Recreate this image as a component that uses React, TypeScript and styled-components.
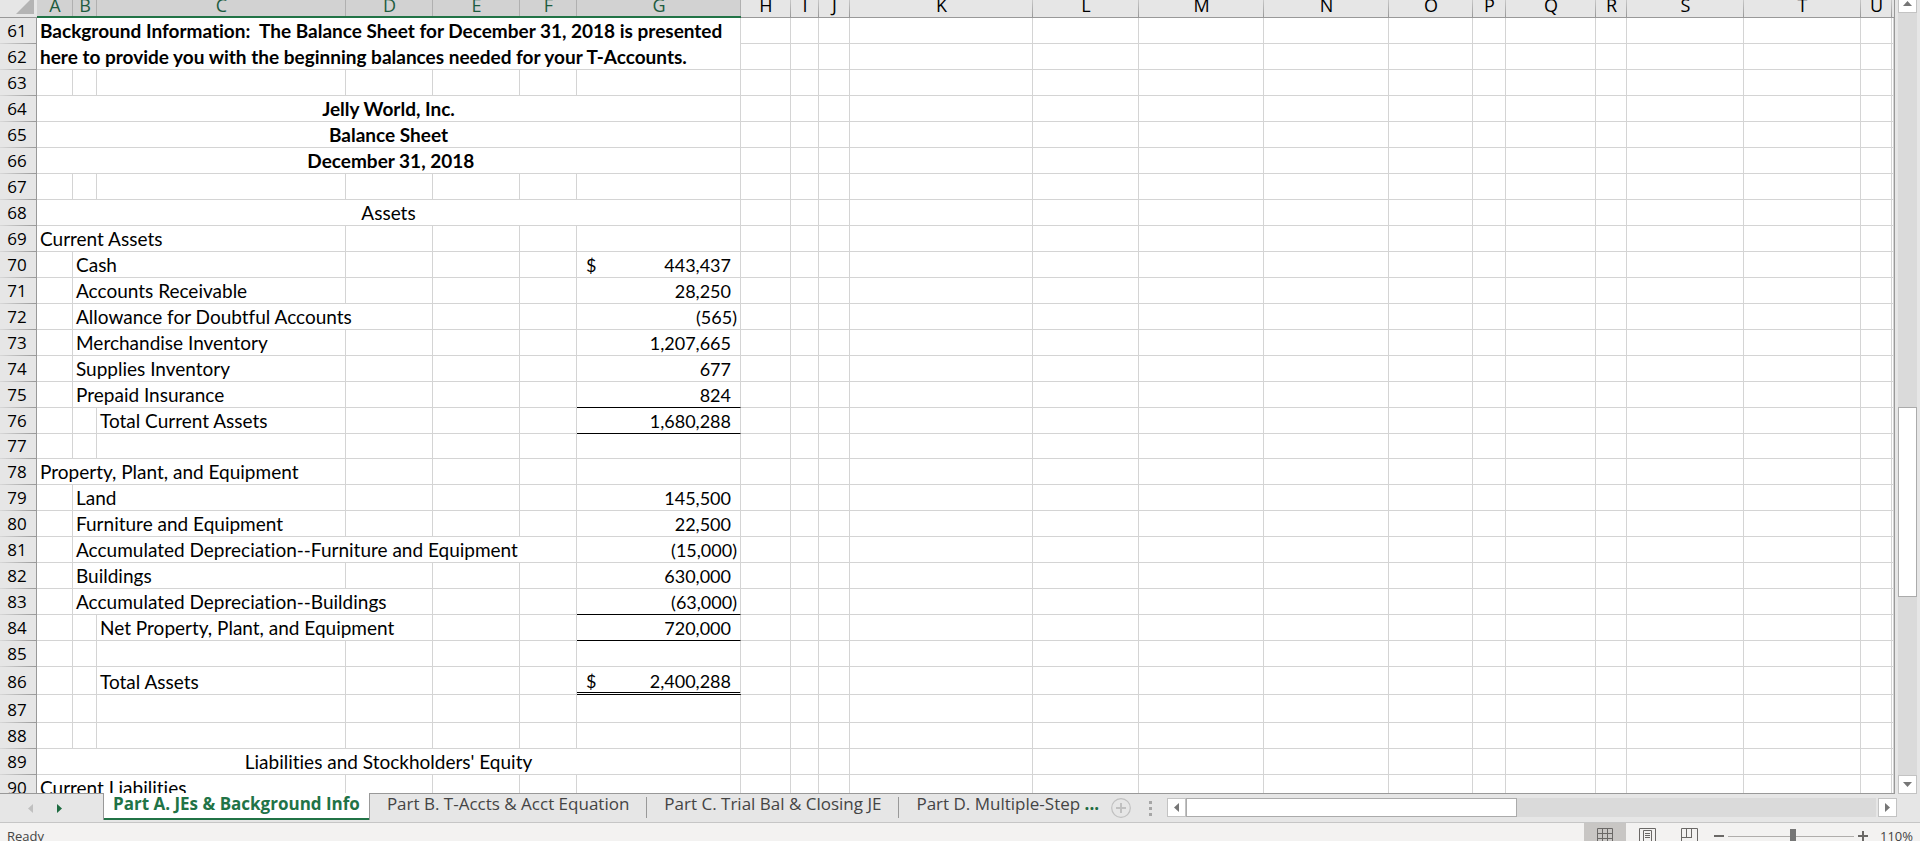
import React from 'react';
import styled, { createGlobalStyle, css } from 'styled-components';

const GlobalStyle = createGlobalStyle`
  * { box-sizing: border-box; }
  html, body { margin: 0; background: #e6e6e6; }
  button { margin: 0; padding: 0; border: 0; background: none; font: inherit; color: inherit; cursor: pointer; }
`;

const uiFont = `'Open Sans', 'Noto Sans', sans-serif`;
const cellFont = `Lato, 'Liberation Sans', sans-serif`;

const Workbook = styled.div`
  display: flex;
  flex-direction: column;
  height: 100vh;
  overflow: hidden;
  font-family: ${uiFont};
  color: #000;
`;

const SheetArea = styled.main`
  display: flex;
  flex: 1;
  min-height: 0;
  background: #e6e6e6;
`;

const GridPane = styled.div`
  flex: 1;
  min-width: 0;
  overflow: hidden;
  background: #fff;
  border-right: 1px solid #999;
  border-bottom: 1px solid #999;
`;

const Grid = styled.table`
  width: 100%;
  table-layout: fixed;
  border-collapse: separate;
  border-spacing: 0;
`;

const Corner = styled.td`
  padding: 0 3px 0 0;
  height: 18px;
  background: #e6e6e6;
  border-bottom: 1px solid #999;
  text-align: right;
  svg { display: block; margin-left: auto; }
`;

const ColHead = styled.th<{ $selected?: boolean; $edge?: boolean }>`
  padding: 0;
  height: 18px;
  font-size: 18px;
  font-weight: 400;
  vertical-align: bottom;
  color: ${p => (p.$selected ? '#1e5c40' : '#000')};
  border-bottom: ${p => (p.$selected ? '2px solid #217346' : '1px solid #999')};
  background: ${p =>
    p.$edge
      ? '#e6e6e6'
      : p.$selected
        ? 'linear-gradient(#b0b0b0, #b0b0b0) right / 1px 100% no-repeat #d2d2d2'
        : 'linear-gradient(#c8c8c8, #999) right / 1px 100% no-repeat #e6e6e6'};
`;

const ColLetter = styled.div<{ $selected?: boolean }>`
  display: flex;
  align-items: flex-end;
  justify-content: center;
  height: ${p => (p.$selected ? 16 : 17)}px;
  padding-bottom: ${p => (p.$selected ? 1 : 2)}px;
  line-height: 20px;
  overflow: hidden;
`;

const Row = styled.tr<{ $h: number }>`
  height: ${p => p.$h}px;
`;

const RowHead = styled.th`
  padding: 0 2px 2px 0;
  font-size: 17px;
  font-weight: 400;
  line-height: 22px;
  text-align: center;
  vertical-align: bottom;
  border-right: 1px solid #999;
  background: linear-gradient(90deg, #d8d8d8, #999) bottom / 100% 1px no-repeat #e6e6e6;
`;

type Rule = 'single' | 'double';

const Cell = styled.td<{ $align?: 'left' | 'center'; $bold?: boolean; $rule?: Rule }>`
  padding: 0 3px 1px;
  font-family: ${cellFont};
  font-size: 19px;
  font-variant-ligatures: none;
  line-height: 22px;
  font-weight: ${p => (p.$bold ? 700 : 400)};
  text-align: ${p => p.$align ?? 'left'};
  vertical-align: bottom;
  white-space: pre;
  border-right: 1px solid #d4d4d4;
  border-bottom: 1px solid #d4d4d4;
  ${p => p.$rule === 'single' && css`border-bottom: 1px solid #000;`}
  ${p => p.$rule === 'double' && css`
    padding-bottom: 0;
    border-bottom: 3px double #000;
  `}
`;

const Paragraph = styled.div`
  height: 50px;
  line-height: 26px;
`;

const Money = styled.div<{ $negative?: boolean }>`
  display: flex;
  justify-content: space-between;
  padding-left: 6px;
  padding-right: ${p => (p.$negative ? 0 : 6)}px;
  font-size: 18px;
`;

const VScroll = styled.div`
  display: flex;
  flex-direction: column;
  width: 19px;
  margin: 0 3px;
  background: #dadada;
`;

const ScrollButton = styled.button<{ $clipped?: boolean }>`
  display: flex;
  align-items: center;
  justify-content: center;
  flex: none;
  width: 19px;
  height: ${p => (p.$clipped ? 13 : 19)}px;
  padding-bottom: ${p => (p.$clipped ? 5 : 0)}px;
  background: #fff;
  border: 1px solid #c3c3c3;
  border-top-width: ${p => (p.$clipped ? 0 : 1)}px;
`;

const VThumb = styled.div`
  height: 190px;
  background: #fff;
  border: 1px solid #ababab;
`;

const Spacer = styled.div<{ $grow: number }>`
  flex: ${p => p.$grow} 1 0;
`;

const TabBar = styled.nav`
  display: flex;
  flex: none;
  height: 28px;
  background: #e6e6e6;
`;

const TabArrows = styled.div`
  display: flex;
  align-items: center;
  gap: 24px;
  width: 103px;
  padding-left: 28px;
  svg { display: block; }
`;

const Tab = styled.button<{ $active?: boolean }>`
  font-size: 17px;
  line-height: 20px;
  white-space: nowrap;
  color: #444;
  padding: 0 17px 6px;
  height: 25px;
  ${p => p.$active && css`
    position: relative;
    height: 27px;
    margin-top: -1px;
    padding: 0 9px 6px;
    background: #fff;
    color: #217346;
    font-weight: 700;
    border: solid #999;
    border-width: 0 1px;
    box-shadow: inset 0 -2px #217346;
  `}
`;

const TabDivider = styled.span`
  width: 1px;
  height: 21px;
  margin-top: 3px;
  background: #999;
`;

const MoreTabs = styled.span`
  color: #1e6b41;
  font-weight: 700;
`;

const AddSheet = styled.button`
  width: 20px;
  height: 20px;
  margin: 4px 18px 0 -5px;
  svg { display: block; }
`;

const SplitHandle = styled.div`
  display: flex;
  flex-direction: column;
  gap: 3px;
  width: 3px;
  margin: 7px 15px 0 0;
  i { width: 3px; height: 3px; background: #a6a6a6; }
`;

const HScroll = styled.div`
  display: flex;
  flex: 1;
  height: 19px;
  margin: 4px 23px 0 0;
`;

const HTrack = styled.div`
  display: flex;
  flex: 1;
  margin-right: 2px;
  background: #dadada;
`;

const HThumb = styled.div`
  width: 48%;
  background: #fff;
  border: 1px solid #ababab;
`;

const StatusBar = styled.footer`
  display: flex;
  flex: none;
  align-items: flex-start;
  height: 19px;
  overflow: hidden;
  background: #f3f2f1;
  border-top: 1px solid #c6c6c6;
  font-size: 13px;
  line-height: 18px;
  color: #444;
`;

const Ready = styled.span`
  margin: 4px auto 0 7px;
`;

const ViewButton = styled.button<{ $active?: boolean }>`
  display: flex;
  justify-content: center;
  width: 42px;
  height: 26px;
  padding-top: 5px;
  background: ${p => (p.$active ? '#c8c6c4' : 'transparent')};
`;

const ZoomButton = styled.button`
  width: 18px;
  padding-top: 7px;
  svg { display: block; margin: 0 auto; }
`;

const ZoomSlider = styled.input`
  appearance: none;
  width: 126px;
  height: 14px;
  margin: 6px 0 0;
  background: linear-gradient(#b0aeac, #b0aeac) center / 100% 1px no-repeat;
  &::-webkit-slider-thumb {
    appearance: none;
    width: 6px;
    height: 14px;
    background: #767676;
  }
`;

const ZoomValue = styled.span`
  width: 48px;
  margin-top: 4px;
  padding-left: 8px;
`;

const columns: [string, number][] = [
  ['A', 36], ['B', 24], ['C', 249], ['D', 87], ['E', 87], ['F', 57], ['G', 164],
  ['H', 50], ['I', 28], ['J', 31], ['K', 183], ['L', 106], ['M', 125], ['N', 125],
  ['O', 84], ['P', 33], ['Q', 90], ['R', 31], ['S', 117], ['T', 117], ['U', 31],
];

const SELECTED = 7;

interface RowData {
  n: number;
  h?: number;
  title?: string;
  bold?: boolean;
  label?: string;
  start?: number;
  span?: number;
  value?: string;
  dollar?: boolean;
  rule?: Rule;
}

const rows: RowData[] = [
  { n: 61 },
  { n: 62 },
  { n: 63 },
  { n: 64, title: 'Jelly World, Inc.', bold: true },
  { n: 65, title: 'Balance Sheet', bold: true },
  { n: 66, title: ' December 31, 2018', bold: true },
  { n: 67 },
  { n: 68, title: 'Assets' },
  { n: 69, label: 'Current Assets', start: 0, span: 3 },
  { n: 70, label: 'Cash', start: 1, span: 2, value: '443,437', dollar: true },
  { n: 71, label: 'Accounts Receivable', start: 1, span: 2, value: '28,250' },
  { n: 72, label: 'Allowance for Doubtful Accounts', start: 1, span: 3, value: '(565)' },
  { n: 73, label: 'Merchandise Inventory', start: 1, span: 2, value: '1,207,665' },
  { n: 74, label: 'Supplies Inventory', start: 1, span: 2, value: '677' },
  { n: 75, label: 'Prepaid Insurance', start: 1, span: 2, value: '824', rule: 'single' },
  { n: 76, label: 'Total Current Assets', start: 2, span: 1, value: '1,680,288', rule: 'single' },
  { n: 77, h: 25 },
  { n: 78, label: 'Property, Plant, and Equipment', start: 0, span: 3 },
  { n: 79, label: 'Land', start: 1, span: 2, value: '145,500' },
  { n: 80, label: 'Furniture and Equipment', start: 1, span: 2, value: '22,500' },
  { n: 81, label: 'Accumulated Depreciation--Furniture and Equipment', start: 1, span: 5, value: '(15,000)' },
  { n: 82, label: 'Buildings', start: 1, span: 2, value: '630,000' },
  { n: 83, label: 'Accumulated Depreciation--Buildings', start: 1, span: 3, value: '(63,000)', rule: 'single' },
  { n: 84, label: 'Net Property, Plant, and Equipment', start: 2, span: 2, value: '720,000', rule: 'single' },
  { n: 85 },
  { n: 86, h: 28, label: 'Total Assets', start: 2, span: 1, value: '2,400,288', dollar: true, rule: 'double' },
  { n: 87, h: 28 },
  { n: 88 },
  { n: 89, title: "Liabilities and Stockholders' Equity" },
  { n: 90, label: 'Current Liabilities', start: 0, span: 3 },
];

function blanks(from: number, to: number) {
  return columns.slice(from, to).map(([name]) => <Cell key={name} />);
}

function Amount({ row }: { row: RowData }) {
  if (!row.value) return <Cell />;
  return (
    <Cell $rule={row.rule}>
      <Money $negative={row.value.startsWith('(')}>
        <span>{row.dollar ? '$' : ''}</span>
        <span>{row.value}</span>
      </Money>
    </Cell>
  );
}

function StatementCells({ row }: { row: RowData }) {
  if (row.n === 61) {
    return (
      <Cell colSpan={7} rowSpan={2} $bold>
        <Paragraph>
          {'Background Information:  The Balance Sheet for December 31, 2018 is presented\nhere to provide you with the beginning balances needed for your T-Accounts.'}
        </Paragraph>
      </Cell>
    );
  }
  if (row.n === 62) return null;
  if (row.title) {
    return <Cell colSpan={7} $align="center" $bold={row.bold}>{row.title}</Cell>;
  }
  if (row.label) {
    const start = row.start ?? 0;
    const span = row.span ?? 1;
    return (
      <>
        {blanks(0, start)}
        <Cell colSpan={span}>{row.label}</Cell>
        {blanks(start + span, 6)}
        <Amount row={row} />
      </>
    );
  }
  return <>{blanks(0, 7)}</>;
}

function Arrow({ dir, color = '#767676' }: { dir: 'up' | 'down' | 'left' | 'right'; color?: string }) {
  const shape = {
    up: '0,5 9,5 4.5,0',
    down: '0,0 9,0 4.5,5',
    left: '5,0 5,9 0,4.5',
    right: '0,0 0,9 5,4.5',
  }[dir];
  const vertical = dir === 'up' || dir === 'down';
  return (
    <svg width={vertical ? 9 : 5} height={vertical ? 5 : 9} aria-hidden="true">
      <polygon points={shape} fill={color} />
    </svg>
  );
}

export default function App() {
  return (
    <Workbook>
      <GlobalStyle />
      <SheetArea>
        <GridPane>
          <Grid>
            <colgroup>
              <col width={37} />
              {columns.map(([name, w]) => <col key={name} width={w} />)}
              <col />
            </colgroup>
            <thead>
              <tr>
                <Corner>
                  <svg width="18" height="17" aria-hidden="true">
                    <polygon points="18,-4 18,14 0,14" fill="#b4b4b4" />
                  </svg>
                </Corner>
                {columns.map(([name], i) => (
                  <ColHead key={name} scope="col" $selected={i < SELECTED}>
                    <ColLetter $selected={i < SELECTED}>{name}</ColLetter>
                  </ColHead>
                ))}
                <ColHead $edge />
              </tr>
            </thead>
            <tbody>
              {rows.map(row => (
                <Row key={row.n} $h={row.h ?? 26}>
                  <RowHead scope="row">{row.n}</RowHead>
                  <StatementCells row={row} />
                  {blanks(7, columns.length)}
                  <Cell />
                </Row>
              ))}
            </tbody>
          </Grid>
        </GridPane>
        <VScroll>
          <ScrollButton $clipped aria-label="Scroll up"><Arrow dir="up" /></ScrollButton>
          <Spacer $grow={394} />
          <VThumb />
          <Spacer $grow={178} />
          <ScrollButton aria-label="Scroll down"><Arrow dir="down" /></ScrollButton>
        </VScroll>
      </SheetArea>
      <TabBar aria-label="Sheets">
        <TabArrows>
          <button aria-label="Previous sheet"><Arrow dir="left" color="#c0c0c0" /></button>
          <button aria-label="Next sheet"><Arrow dir="right" color="#1e6b41" /></button>
        </TabArrows>
        <Tab $active>Part A. JEs &amp; Background Info</Tab>
        <Tab>Part B. T-Accts &amp; Acct Equation</Tab>
        <TabDivider />
        <Tab>Part C. Trial Bal &amp; Closing JE</Tab>
        <TabDivider />
        <Tab>Part D. Multiple-Step <MoreTabs>...</MoreTabs></Tab>
        <AddSheet aria-label="New sheet">
          <svg width="20" height="20" fill="none" stroke="#c0c0c0" aria-hidden="true">
            <circle cx="10" cy="10" r="9.3" strokeWidth="1.2" />
            <path d="M10 5v10M5 10h10" strokeWidth="2" />
          </svg>
        </AddSheet>
        <SplitHandle><i /><i /><i /></SplitHandle>
        <HScroll>
          <ScrollButton aria-label="Scroll left"><Arrow dir="left" /></ScrollButton>
          <HTrack><HThumb /></HTrack>
          <ScrollButton aria-label="Scroll right"><Arrow dir="right" /></ScrollButton>
        </HScroll>
      </TabBar>
      <StatusBar>
        <Ready>Ready</Ready>
        <ViewButton $active aria-label="Normal view">
          <svg width="16" height="16" fill="none" stroke="#6a6866" aria-hidden="true">
            <path d="M.5 .5h15v15h-15zM5.5 0v16M10.5 0v16M0 5.5h16M0 10.5h16" />
          </svg>
        </ViewButton>
        <ViewButton aria-label="Page layout view">
          <svg width="17" height="16" fill="none" stroke="#6a6866" aria-hidden="true">
            <path d="M.5 .5h16v15h-16zM4.5 2.5h8v11h-8zM6 5.5h5M6 7.5h5M6 9.5h5" />
          </svg>
        </ViewButton>
        <ViewButton aria-label="Page break view">
          <svg width="17" height="16" fill="none" stroke="#6a6866" aria-hidden="true">
            <path d="M.5 .5h16v15h-16zM5.5 0v9.500M10.5 0v9.500M0 9.500h11" />
          </svg>
        </ViewButton>
        <ZoomButton aria-label="Zoom out">
          <svg width="10" height="12" aria-hidden="true"><path d="M0 6h10" stroke="#6a6866" strokeWidth="2" /></svg>
        </ZoomButton>
        <ZoomSlider type="range" min={0} max={100} defaultValue={52} aria-label="Zoom" />
        <ZoomButton aria-label="Zoom in">
          <svg width="10" height="12" aria-hidden="true"><path d="M0 6h10M5 1v10" stroke="#6a6866" strokeWidth="2" /></svg>
        </ZoomButton>
        <ZoomValue>110%</ZoomValue>
      </StatusBar>
    </Workbook>
  );
}
